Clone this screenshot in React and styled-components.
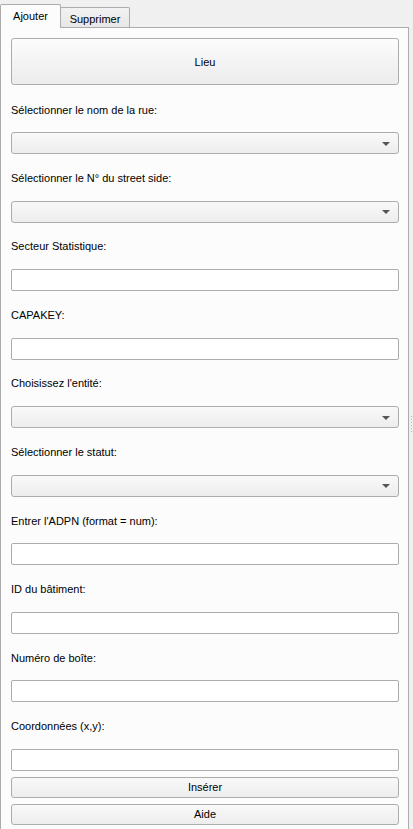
import React, { useState } from 'react';
import styled, { createGlobalStyle, css } from 'styled-components';

const GlobalStyle = createGlobalStyle`
  html, body {
    margin: 0;
    padding: 0;
    background: #f0f0f0;
    height: 100%;
    overflow: hidden;
  }
  #root {
    height: 100%;
  }
  * {
    box-sizing: border-box;
  }
`;

const fields = [
  { label: 'Sélectionner le nom de la rue:', kind: 'combo' },
  { label: 'Sélectionner le N° du street side:', kind: 'combo' },
  { label: 'Secteur Statistique:', kind: 'input' },
  { label: 'CAPAKEY:', kind: 'input' },
  { label: "Choisissez l'entité:", kind: 'combo' },
  { label: 'Sélectionner le statut:', kind: 'combo' },
  { label: "Entrer l'ADPN (format = num):", kind: 'input' },
  { label: 'ID du bâtiment:', kind: 'input' },
  { label: 'Numéro de boîte:', kind: 'input' },
  { label: 'Coordonnées (x,y):', kind: 'input' },
];

const App = () => {
  const [tab, setTab] = useState('add');

  return (
    <>
      <GlobalStyle />
      <Window>
        <Panel>
          <TabBar>
            <Tab active={tab === 'add'} onClick={() => setTab('add')}>
              Ajouter
            </Tab>
            <Tab active={tab === 'del'} onClick={() => setTab('del')}>
              Supprimer
            </Tab>
          </TabBar>
          <Pane>
            <BigButton type="button">Lieu</BigButton>
            {fields.map((f, i) => (
              <React.Fragment key={f.label}>
                <Label first={i === 0}>{f.label}</Label>
                {f.kind === 'combo' ? (
                  <Combo>
                    <Arrow />
                  </Combo>
                ) : (
                  <TextInput />
                )}
              </React.Fragment>
            ))}
            <SmallButton type="button">Insérer</SmallButton>
            <SmallButton type="button">Aide</SmallButton>
          </Pane>
        </Panel>
        <Handle>
          <Dots />
        </Handle>
      </Window>
    </>
  );
};

export default App;

const Window = styled.div`
  display: flex;
  height: 100%;
  font-family: 'Liberation Sans', Arial, sans-serif;
  font-size: 11px;
  color: #000;
`;

const Panel = styled.div`
  width: 409px;
  display: flex;
  flex-direction: column;
`;

const TabBar = styled.div`
  height: 27px;
  display: flex;
  align-items: flex-end;
`;

const Tab = styled.div`
  position: relative;
  display: flex;
  align-items: center;
  justify-content: center;
  border: 1px solid #acacac;
  border-bottom: none;
  border-radius: 2px 2px 0 0;
  cursor: default;
  ${(p) =>
    p.active
      ? css`
          width: 61px;
          height: 24px;
          margin-bottom: -1px;
          padding-bottom: 1px;
          background: #fcfcfc;
          z-index: 1;
        `
      : css`
          width: 70px;
          height: 20px;
          margin-left: -1px;
          padding-top: 2px;
          background: linear-gradient(#f2f2f2, #e7e7e7);
        `}
`;

const Pane = styled.div`
  flex: 1;
  display: flex;
  flex-direction: column;
  background: #fcfcfc;
  border: 1px solid #acacac;
  border-bottom: none;
  padding: 10px 9px 0 10px;
`;

const raised = css`
  border: 1px solid #acacac;
  border-radius: 3px;
  background: linear-gradient(#f9f9f9, #ededed);
`;

const BigButton = styled.button`
  ${raised}
  height: 47px;
  flex: none;
  font: inherit;
  color: inherit;
  padding: 0;
  background: linear-gradient(#fcfcfc, #ececec);
`;

const Label = styled.div`
  height: ${(p) => (p.first ? '47px' : '46.56px')};
  flex: none;
  display: flex;
  align-items: center;
  padding-top: ${(p) => (p.first ? '3px' : '1px')};
  white-space: nowrap;
`;

const Combo = styled.div`
  ${raised}
  height: 22px;
  flex: none;
  display: flex;
  align-items: center;
  justify-content: flex-end;
  padding-right: 8px;
`;

const Arrow = styled.span`
  width: 0;
  height: 0;
  border-left: 4px solid transparent;
  border-right: 4px solid transparent;
  border-top: 4px solid #555;
  margin-top: 1px;
`;

const TextInput = styled.div`
  height: 22px;
  flex: none;
  border: 1px solid #acacac;
  border-radius: 2px;
  background: #fff;
`;

const SmallButton = styled.button`
  ${raised}
  height: 21px;
  flex: none;
  margin-top: 6px;
  font: inherit;
  color: inherit;
  padding: 0;
`;

const Handle = styled.div`
  flex: 1;
  display: flex;
  align-items: center;
  justify-content: center;
`;

const Dots = styled.div`
  width: 1px;
  height: 18px;
  margin-top: 20px;
  background: repeating-linear-gradient(#b8b8b8 0 1px, transparent 1px 3px);
`;
